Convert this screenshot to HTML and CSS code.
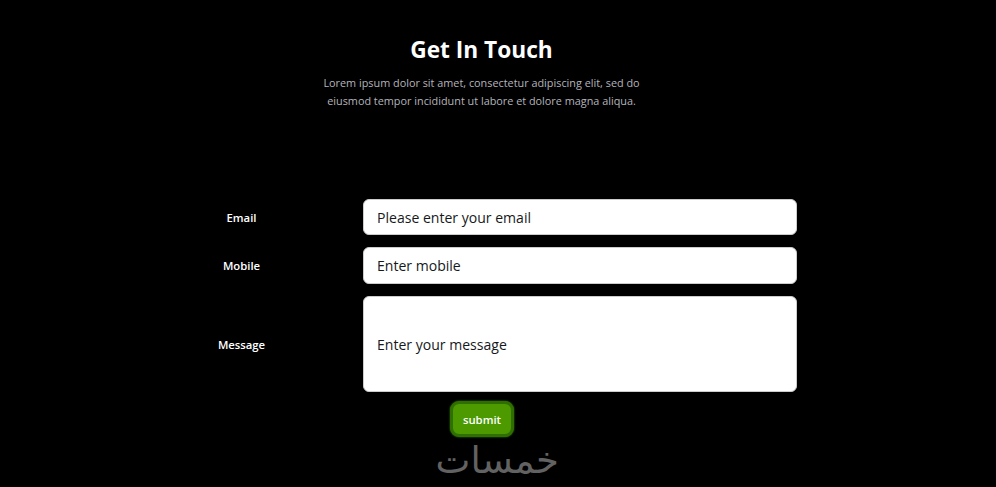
FILE: index.html
```html
<!DOCTYPE html>
<html lang="en">
<head>
    <meta charset="UTF-8">
    <meta name="viewport" content="width=device-width, initial-scale=1.0">
    <title>Get In Touch</title>
    <link rel="stylesheet" href="styles.css">
</head>
<body>
    <div class="contact">
        <div class="contact-head">
            <h2>Get In Touch</h2>
            <p>Lorem ipsum dolor sit amet, consectetur adipiscing elit, sed do<br>eiusmod tempor incididunt ut labore et dolore magna aliqua.</p>
        </div>

        <form class="contact-form">
            <label for="email">Email</label>
            <input type="text" id="email" placeholder="Please enter your email">

            <label for="mobile">Mobile</label>
            <input type="text" id="mobile" class="tall" placeholder="Enter mobile">

            <label for="message">Message</label>
            <div class="message-box" id="message">Enter your message</div>

            <div class="form-actions">
                <button type="button" class="submit-btn">submit</button>
            </div>
        </form>

        <div class="watermark" lang="ar" dir="rtl">خمسات</div>
    </div>
</body>
</html>
```

FILE: styles.css
```css
body {
    margin: 0;
    background-color: #000;
    color: #fff;
    font-family: "Open Sans", "Noto Sans", sans-serif;
    height: 487px;
    overflow: hidden;
}

.contact {
    width: 963px;
}

.contact-head {
    text-align: center;
    padding-top: 34px;
}

.contact-head h2 {
    margin: 0;
    font-size: 22.7px;
    line-height: 32px;
    font-weight: 700;
}

.contact-head p {
    margin: 8px 0 0;
    font-size: 10.85px;
    line-height: 18px;
    color: #b4b4bc;
}

.contact-form {
    display: grid;
    grid-template-columns: 243px 434px;
    grid-auto-rows: auto;
    row-gap: 12px;
    align-items: center;
    margin: 89px 0 0 120px;
}

.contact-form label {
    text-align: center;
    font-size: 11.3px;
    font-weight: 600;
}

.contact-form input,
.message-box {
    box-sizing: border-box;
    width: 100%;
    height: 36px;
    padding: 0 13px;
    border: 1px solid #ccc;
    border-radius: 6px;
    background-color: #fff;
    color: #16191c;
    font-family: inherit;
    font-size: 14.05px;
    outline: none;
}

.contact-form input.tall {
    height: 37px;
}

.contact-form input::placeholder {
    color: #16191c;
    opacity: 1;
}

.message-box {
    display: flex;
    align-items: center;
    height: 96px;
}

.form-actions {
    grid-column: 1 / 3;
    margin-top: -3px;
    padding-left: 330px;
}

.submit-btn {
    display: block;
    width: 64px;
    height: 36px;
    padding: 0;
    border: 3px solid #2f6f00;
    border-radius: 9px;
    background-color: #4c9a00;
    box-shadow: 0 0 2px #3f8a00;
    color: #fff;
    font-family: inherit;
    font-size: 11.3px;
    font-weight: 600;
}

.watermark {
    margin: 5px 0 0 437px;
    width: 122px;
    text-align: center;
    font-family: "DejaVu Sans", sans-serif;
    font-size: 37px;
    line-height: 38px;
    color: #626262;
}
```
